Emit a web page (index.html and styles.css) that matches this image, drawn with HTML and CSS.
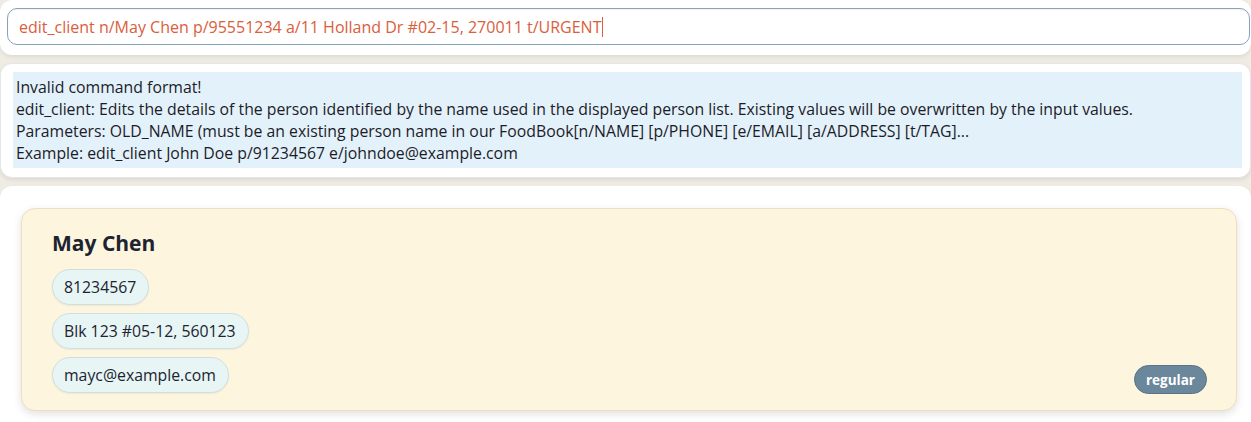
FILE: index.html
```html
<!DOCTYPE html>
<html>
<head>
<meta charset="utf-8">
<link rel="stylesheet" href="styles.css">
</head>
<body>
<div class="app">
  <div class="panel panel-cmd">
    <div class="cmd-input">edit_client n/May Chen p/95551234 a/11 Holland Dr #02-15, 270011 t/URGENT<span class="caret"></span></div>
  </div>
  <div class="panel panel-result">
    <div class="result-box">
      <div class="line">Invalid command format!</div>
      <div class="line">edit_client: Edits the details of the person identified by the name used in the displayed person list. Existing values will be overwritten by the input values.</div>
      <div class="line">Parameters: OLD_NAME (must be an existing person name in our FoodBook[n/NAME] [p/PHONE] [e/EMAIL] [a/ADDRESS] [t/TAG]...</div>
      <div class="line">Example: edit_client John Doe p/91234567 e/johndoe@example.com</div>
    </div>
  </div>
  <div class="panel panel-list">
    <div class="card">
      <div class="card-name">May Chen</div>
      <div class="pills">
        <span class="pill">81234567</span>
        <span class="pill">Blk 123 #05-12, 560123</span>
        <span class="pill">mayc@example.com</span>
      </div>
      <span class="tag">regular</span>
    </div>
  </div>
</div>
</body>
</html>
```
FILE: styles.css
```css
html, body {
  margin: 0;
  padding: 0;
}
body {
  background: #efece4;
  font-family: "Open Sans", "Noto Sans", sans-serif;
  width: 1251px;
  height: 422px;
  overflow: hidden;
}
.app {
  display: flex;
  flex-direction: column;
  gap: 8px;
  height: 422px;
}
.panel {
  background: #ffffff;
  border-radius: 12px;
  box-shadow: 0 2px 4px rgba(0,0,0,0.08);
}
.panel-cmd {
  padding: 8px 1px 10px 7px;
}
.cmd-input {
  height: 35px;
  border: 1px solid #86a3bd;
  border-radius: 10px;
  padding: 0 11px;
  display: flex;
  align-items: center;
  color: #d9603b;
  font-size: 16px;
  box-shadow: inset 0 1px 2px rgba(0,0,0,0.05);
}
.caret {
  display: inline-block;
  width: 1px;
  height: 20px;
  background: #d9603b;
  margin-left: 1px;
}
.panel-result {
  border: 1px solid #e6e6e6;
  padding: 8px 8px 9px 12px;
}
.result-box {
  background: #e3f1fb;
  padding: 4px 4px 4px 3px;
  color: #1c1c28;
  font-size: 15.8px;
  line-height: 22px;
}
.panel-list {
  flex: 1;
  padding: 22px 14px 0 21px;
  border-radius: 12px 12px 0 0;
}
.card {
  position: relative;
  background: #fdf5de;
  border: 1px solid #ecdfc2;
  border-radius: 14px;
  box-shadow: 0 3px 8px rgba(0,0,0,0.12);
  padding: 20px 30px 17px 30px;
}
.card-name {
  font-size: 21px;
  font-weight: 700;
  color: #1d2330;
  line-height: 28px;
  margin-bottom: 12px;
}
.pills {
  display: flex;
  flex-direction: column;
  align-items: flex-start;
  gap: 8px;
}
.pill {
  background: #e7f5f5;
  border: 1px solid #cfe0e3;
  border-radius: 18px;
  padding: 0 12px 0 11px;
  height: 34px;
  display: flex;
  align-items: center;
  font-size: 15.8px;
  color: #1c2430;
  box-shadow: 0 1px 2px rgba(0,0,0,0.06);
}
.tag {
  position: absolute;
  right: 29px;
  bottom: 16px;
  background: #6a879c;
  border: 1px solid #5a7488;
  color: #ffffff;
  font-weight: 700;
  font-size: 13.5px;
  border-radius: 15px;
  padding: 0 11px;
  height: 27px;
  box-sizing: content-box;
  display: flex;
  align-items: center;
  min-height: 29px;
  box-sizing: border-box;
  height: 29px;
}
```
